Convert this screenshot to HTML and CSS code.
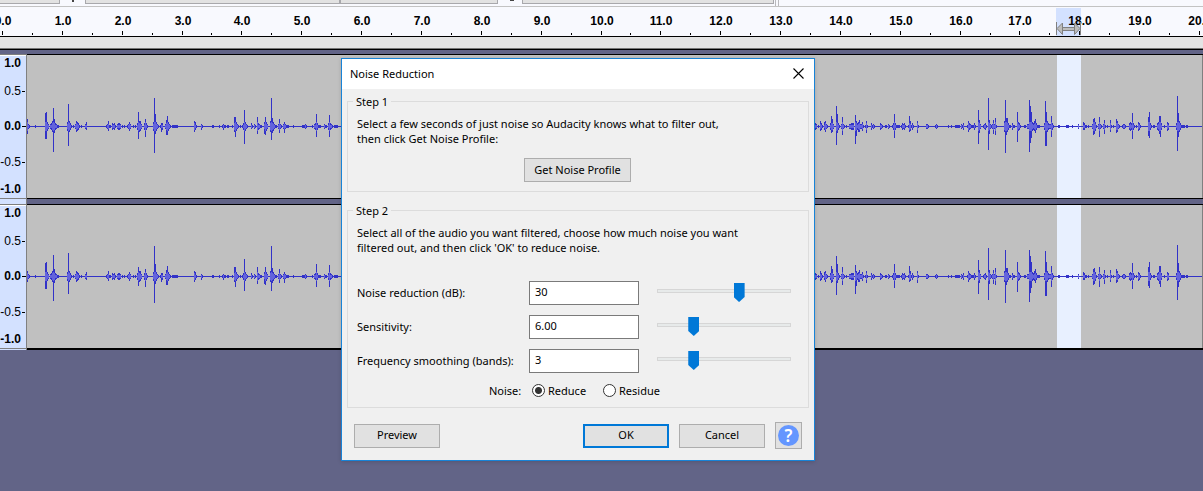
FILE: index.html
```html
<!DOCTYPE html>
<html lang="en">
<head>
<meta charset="utf-8">
<title>Noise Reduction</title>
<link rel="stylesheet" href="styles.css">
</head>
<body>
<div class="toolbar" aria-hidden="true">
  <span class="slot slot-first"></span>
  <span class="stub"></span>
  <span class="slot slot-second"></span>
  <span class="slot slot-third"></span>
  <span class="stub stub-wide"></span>
  <span class="slot slot-fourth"></span>
  <span class="grip"></span>
</div>
<svg class="ruler" id="ruler"></svg>
<div class="scroll-strip"></div>
<main class="tracks">
  <div class="track">
    <ul class="scale">
      <li class="major end">1.0</li><li>0.5</li><li class="major zero">0.0</li><li>-0.5</li><li class="major end">-1.0</li>
    </ul>
    <svg class="wave" data-channel="left"></svg>
  </div>
  <div class="track">
    <ul class="scale">
      <li class="major end">1.0</li><li>0.5</li><li class="major zero">0.0</li><li>-0.5</li><li class="major end">-1.0</li>
    </ul>
    <svg class="wave" data-channel="right"></svg>
  </div>
</main>

<section class="dialog" role="dialog" aria-labelledby="dialog-title">
  <header class="titlebar">
    <h1 class="title" id="dialog-title">Noise Reduction</h1>
    <button class="close" type="button" aria-label="Close">
      <svg width="11" height="11" viewBox="0 0 11 11"><path d="M.5 .5L10.5 10.5M10.5 .5L.5 10.5" stroke="#000" stroke-width="1.1"/></svg>
    </button>
  </header>
  <form class="content">
    <fieldset class="step">
      <legend>Step 1</legend>
      <p>Select a few seconds of just noise so Audacity knows what to filter out,<br>then click Get Noise Profile:</p>
      <button class="btn profile" type="button">Get Noise Profile</button>
    </fieldset>
    <fieldset class="step">
      <legend>Step 2</legend>
      <p>Select all of the audio you want filtered, choose how much noise you want<br>filtered out, and then click 'OK' to reduce noise.</p>
      <div class="settings">
        <label for="reduction">Noise reduction (dB):</label>
        <input class="value" id="reduction" type="text" value="30">
        <input class="slider" type="range" min="0" max="48" value="30" aria-label="Noise reduction (dB)">
        <label for="sensitivity">Sensitivity:</label>
        <input class="value" id="sensitivity" type="text" value="6.00">
        <input class="slider" type="range" min="0" max="24" value="6" aria-label="Sensitivity">
        <label for="smoothing">Frequency smoothing (bands):</label>
        <input class="value" id="smoothing" type="text" value="3">
        <input class="slider" type="range" min="0" max="12" value="3" aria-label="Frequency smoothing (bands)">
      </div>
      <div class="mode" role="radiogroup" aria-labelledby="mode-label">
        <span class="mode-label" id="mode-label">Noise:</span>
        <label class="option"><input type="radio" name="mode" checked>Reduce</label>
        <label class="option"><input type="radio" name="mode">Residue</label>
      </div>
    </fieldset>
    <footer class="actions">
      <button class="btn preview" type="button">Preview</button>
      <button class="btn default" type="button">OK</button>
      <button class="btn" type="button">Cancel</button>
      <button class="btn help" type="button" aria-label="Help"><span class="help-mark">?</span></button>
    </footer>
  </form>
</section>
<script src="app.js"></script>
</body>
</html>
```

FILE: styles.css
```css
* { box-sizing: border-box; }

body {
  margin: 0;
  min-height: 100vh;
  position: relative;
  overflow: hidden;
  background: #626487;
  color: #000;
  font: 12px/15px "Liberation Sans", Arial, sans-serif;
}

.toolbar {
  display: flex;
  height: 7px;
  background: #f8f9fe;
  border-bottom: 1px solid #c3c3c3;
}
.slot {
  height: 4px;
  background: #e2e2e2;
  border: solid #a8a8ac;
  border-width: 0 1px 1px 0;
}
.slot-first { width: 60px; }
.slot-second { width: 255px; border-left-width: 1px; }
.slot-third { width: 158px; border-left-width: 1px; }
.slot-fourth { width: 252px; border-left-width: 1px; }
.stub { width: 2px; height: 2px; margin: 0 11px 0 12px; background: #444; }
.stub-wide { width: 4px; height: 1px; margin: 0 8px 0 12px; }
.grip { width: 4px; margin-left: 1px; border: solid #b9b9bd; border-width: 0 1px; }

.ruler {
  display: block;
  width: 100%;
  height: 30px;
  background: #f8f9fe;
  border-bottom: 1px solid #000;
}
.ruler text { font-weight: bold; text-anchor: middle; }
.scroll-strip {
  height: 12px;
  background: #e4e4e4;
  border-bottom: 1px solid #777;
}

.tracks { border-top: 1px solid #000; padding-top: 4px; }
.track {
  display: flex;
  height: 150px;
  background: linear-gradient(#000 0 1px, #c0c0c0 1px 144px, #000 144px 145px, #626487 145px);
}
.track:last-child {
  height: 146px;
  background: linear-gradient(#000 0 1px, #c0c0c0 1px 144px, #000 144px);
}
.scale {
  flex: none;
  display: grid;
  grid-template-rows: 17px 38px 33px 38px 16px;
  align-items: center;
  width: 27px;
  margin: 0;
  padding: 1px 0 0;
  list-style: none;
  text-align: right;
  background: linear-gradient(#7d7d7d 0 1px, #fff 1px 2px, #d3e1ff 2px 144px, #808080 144px 145px, #d3e1ff 145px);
  border-right: 1px solid #808080;
}
.scale li {
  display: flex;
  justify-content: flex-end;
  align-items: center;
  gap: 1px;
}
.scale li::after { content: ""; width: 3px; height: 1px; background: #000; margin-right: 1px; }
.scale .end::after { visibility: hidden; }
.scale .zero::after { width: 4px; margin-right: 0; }
.major { font-weight: bold; }
.wave {
  flex: 1;
  min-width: 0;
  height: 143px;
  margin-top: 1px;
  border-right: 1px solid #808080;
}

.dialog {
  position: absolute;
  top: 58px;
  left: 341px;
  width: 474px;
  background: #f0f0f0;
  border: 1px solid #1883d7;
  box-shadow: 0 1px 4px rgba(0, 0, 0, .15);
  font: 11px/15px "Noto Sans", "Open Sans", sans-serif;
}
.titlebar {
  display: flex;
  justify-content: space-between;
  align-items: center;
  height: 30px;
  padding: 0 10px 1px 8px;
  background: #fff;
}
.title { margin: 0; font-size: 11px; font-weight: normal; }
.close { display: flex; padding: 0; border: 0; background: none; }

.content { padding: 5px; }
.step {
  min-width: 0;
  margin: 0 0 11px;
  padding: 7px 9px 8px;
  border: 1px solid #dcdcdc;
}
.step legend { margin-left: -4px; padding: 0 3px; }
.step p { margin: 0; white-space: nowrap; }

.btn {
  width: 86px;
  height: 24px;
  padding: 0 0 2px;
  border: 1px solid #adadad;
  border-radius: 0;
  background: #e1e1e1;
  color: #000;
  font: inherit;
}
.profile { display: block; width: 107px; margin: 12px auto 1px 167px; }

.settings {
  display: grid;
  grid-template-columns: 172px 110px 134px;
  grid-auto-rows: 24px;
  align-items: center;
  row-gap: 10px;
  margin-top: 26px;
}
.settings label { padding-bottom: 1px; }
.value {
  width: 110px;
  height: 24px;
  padding: 0 5px 3px;
  border: 1px solid #7a7a7a;
  background: #fff;
  color: #000;
  font: inherit;
}
.slider {
  appearance: none;
  width: 134px;
  height: 20px;
  margin: 0 0 0 18px;
  background: none;
}
.slider::-webkit-slider-runnable-track {
  height: 4px;
  margin-bottom: 4px;
  border: 1px solid #d6d6d6;
  background: #e7eaea;
}
.slider::-webkit-slider-thumb {
  appearance: none;
  width: 11px;
  height: 19px;
  margin-top: -7px;
  background: #0078d7;
  clip-path: polygon(0 0, 100% 0, 100% 74%, 50% 100%, 0 74%);
}

.mode {
  display: flex;
  align-items: center;
  height: 16px;
  margin-top: 9px;
  margin-bottom: 1px;
  padding-left: 132px;
}
.mode-label { width: 43px; }
.option { display: flex; align-items: center; gap: 3px; width: 71px; }
.option input {
  appearance: none;
  flex: none;
  width: 13px;
  height: 13px;
  margin: 0;
  border: 1px solid #333;
  border-radius: 50%;
  background: #fff;
}
.option input:checked { background: radial-gradient(circle, #333 0 3px, #fff 4px); }

.actions {
  display: flex;
  align-items: center;
  gap: 10px;
  margin-top: 14px;
  padding: 0 7px 6px;
}
.preview { margin-right: auto; }
.default { border: 2px solid #0078d7; }
.help {
  display: flex;
  align-items: center;
  justify-content: center;
  width: 27px;
  height: 27px;
  padding: 0;
}
.help-mark {
  width: 21px;
  height: 21px;
  border-radius: 50%;
  background: #6496ff;
  color: #fff;
  font-size: 17px;
  font-weight: 600;
  line-height: 21px;
}
```

FILE: app.js
```js
// Peaks as "x:up:down" (or "x:size" when symmetric), in pixels around the zero line.
const PEAKS = `27:7 28:2 29:1 35:1 45:13:12 46:14:12 47:4 48:2 50:2 51:3 52:5 53:18:25 54:7:6 55:3 56:2 57:1 58:1
67:4 68:22:19 69:5 70:3 71:1 73:1 75:2 76:5 77:4 78:3 79:1 81:1 85:2 86:4:3 106:1 107:2 108:5:4 109:1 110:1 112:3
113:2 114:3 115:1 117:2 118:3 119:3 120:2 122:1 124:1 127:1 128:2 129:4 130:2 133:1 135:1 137:3 138:14:12 139:5
140:5:4 141:2 144:3 145:7:10 146:3 147:1 153:4 154:28:26 155:12:7 156:4 157:2 158:1 160:1 161:3:5 162:3 165:2
166:6:8 167:10:8 168:4 169:2 170:1 172:1 173:1 174:1 175:1 176:1 177:1 194:5 195:4:3 196:1 201:2:3 202:1 212:1
213:1 219:1 222:1 223:2:3 224:1 225:1 227:1 228:1 232:1 234:9:5 235:9:10 236:4 237:2 238:1 240:1 242:1 243:3
244:16:17 245:4 246:2 247:1 251:3:2 252:1 254:2 255:1 257:9:7 258:3 259:2 260:1 261:1 264:4:7 265:9:8 266:4
267:2 270:5 271:28:13 272:8:6 273:4 274:2 275:1 276:1 278:2 279:7:6 280:2 281:1 283:2 284:4:6 285:2 286:1 287:1
288:1 293:1 302:1 303:1 304:1 305:2 306:1 312:1 314:2 315:3 316:12:10 317:3 318:1 319:1 320:1 324:2 325:1 326:1
328:3 329:11:10 330:3 331:2 332:1 334:1 335:1 336:1 337:1 815:3 816:2 818:1 820:5:4 821:3 822:1 824:4:3 825:5
826:2 827:1 830:3 831:10:6 832:7:5 833:2 836:20:18 837:12:6 838:3 839:1 841:2 842:9:8 843:2 844:1 846:1 849:2
850:2 851:3 852:3 853:3 855:11:17 856:5:9 857:3 858:4:5 859:6:5 860:2 861:2 862:4 863:1 865:1 866:5:6 867:1
871:3 872:1 873:2 874:1 880:3 881:2 882:1 885:1 886:1 888:2 889:1 892:1 893:3 894:12:11 895:3 896:1 897:1 898:1
899:1 901:1 902:3 903:2 904:3 905:1 908:1 909:10:5 910:5:4 911:1 912:3 913:1 917:5:6 918:1 926:2 927:2 928:1
935:1 936:2 937:1 948:1 951:1 955:1 956:1 957:1 958:1 959:1 961:2 962:1 963:3 967:1 968:5 969:3 970:2 971:1
972:1 973:1 974:3 975:1 978:16:17 979:6 980:2 983:1 984:2 985:3 986:1 988:28:23 989:6:7 990:2 991:1 992:2
993:6:7 994:2 995:8 996:1 1004:5 1005:26 1006:8 1007:8:5 1008:3 1009:1 1010:1 1012:3 1013:1 1014:1 1017:14:15
1018:4 1019:3 1020:1 1024:1 1025:1 1027:2 1028:2 1029:26:25 1030:20:16 1031:14:11 1032:4 1033:3 1034:5:4 1035:7:6
1036:3 1037:1 1038:1 1039:1 1044:3 1045:25:19 1046:14:19 1047:5 1048:3 1049:2 1050:2 1051:10 1052:3 1053:1 1058:1
1059:1 1066:1 1067:1 1068:1 1072:1 1078:2 1083:4:3 1084:3 1085:1 1086:1 1088:1 1092:2 1093:7:8 1094:8:7 1095:4
1096:1 1098:2 1099:9:10 1100:2 1101:1 1103:2 1104:6:7 1105:1 1107:1 1110:6:5 1111:1 1113:1 1116:7:6 1117:5 1118:2
1119:1 1122:1 1123:2 1124:2 1125:1 1129:3 1130:4 1131:3 1132:13:12 1133:3 1134:1 1136:1 1138:4 1139:3 1140:1
1148:9 1149:14:11 1150:3 1151:1 1153:1 1154:1 1157:3 1158:4 1159:10:7 1160:10 1161:3 1164:1 1167:4 1168:3 1176:3
1177:30:24 1178:13:10 1179:5 1180:3 1181:1 1182:1 1183:1 1184:1 1186:1 1187:1`;

// Peaks where the right channel differs from the left one.
const RIGHT = { 27: [5, 5], 53: [21, 24], 68: [23, 17], 138: [9, 9], 154: [30, 26], 244: [17, 14], 271: [30, 14], 1177: [31, 23] };

const TRACK_X = 27;
const ZERO_Y = 71;

function rect(x, y, w, h, fill) {
  return `<rect x="${x}" y="${y}" width="${w}" height="${h}" fill="${fill}"/>`;
}

function drawWave(svg) {
  const right = svg.dataset.channel === "right";
  let out = rect(1057 - TRACK_X, 0, 24, 143, "#e8f0ff") + rect(0, ZERO_Y, "100%", 1, "#3232c8");
  let core = "";
  for (const item of PEAKS.split(/\s+/)) {
    let [x, up, down = up] = item.split(":").map(Number);
    if (right && RIGHT[x]) [up, down] = RIGHT[x];
    out += rect(x - TRACK_X, ZERO_Y - up, 1, up + down + 1, "#3232c8");
    const r = Math.min(4, Math.floor(Math.min(up, down) * 0.6));
    if (r > 0) core += rect(x - TRACK_X, ZERO_Y - r, 1, 2 * r + 1, "#6464dc");
  }
  svg.innerHTML = out + core;
}

function drawRuler(svg) {
  let out = rect(1056, 1, 25, 28, "#d3e1ff");
  for (let half = 0; half <= 40; half++) {
    const x = Math.round(2 + half * 29.925);
    if (half % 2) {
      out += rect(x, 26, 1, 2, "#000");
    } else {
      out += rect(x, 24, 1, 4, "#000");
      out += `<text x="${x + 1}" y="18">${(half / 2).toFixed(1)}</text>`;
    }
  }
  out += `<g transform="translate(1056 15)" fill="#bcbcbc" stroke="#808080">
    <path d="M.5 0V13M24.5 0V13"/>
    <path d="M6 5.5H19V8.5H6Z"/>
    <path d="M1 6.5L6.5 1V12.5ZM24 6.5L18.5 1V12.5Z"/></g>`;
  svg.innerHTML = out;
}

document.querySelectorAll(".wave").forEach(drawWave);
drawRuler(document.getElementById("ruler"));
```
